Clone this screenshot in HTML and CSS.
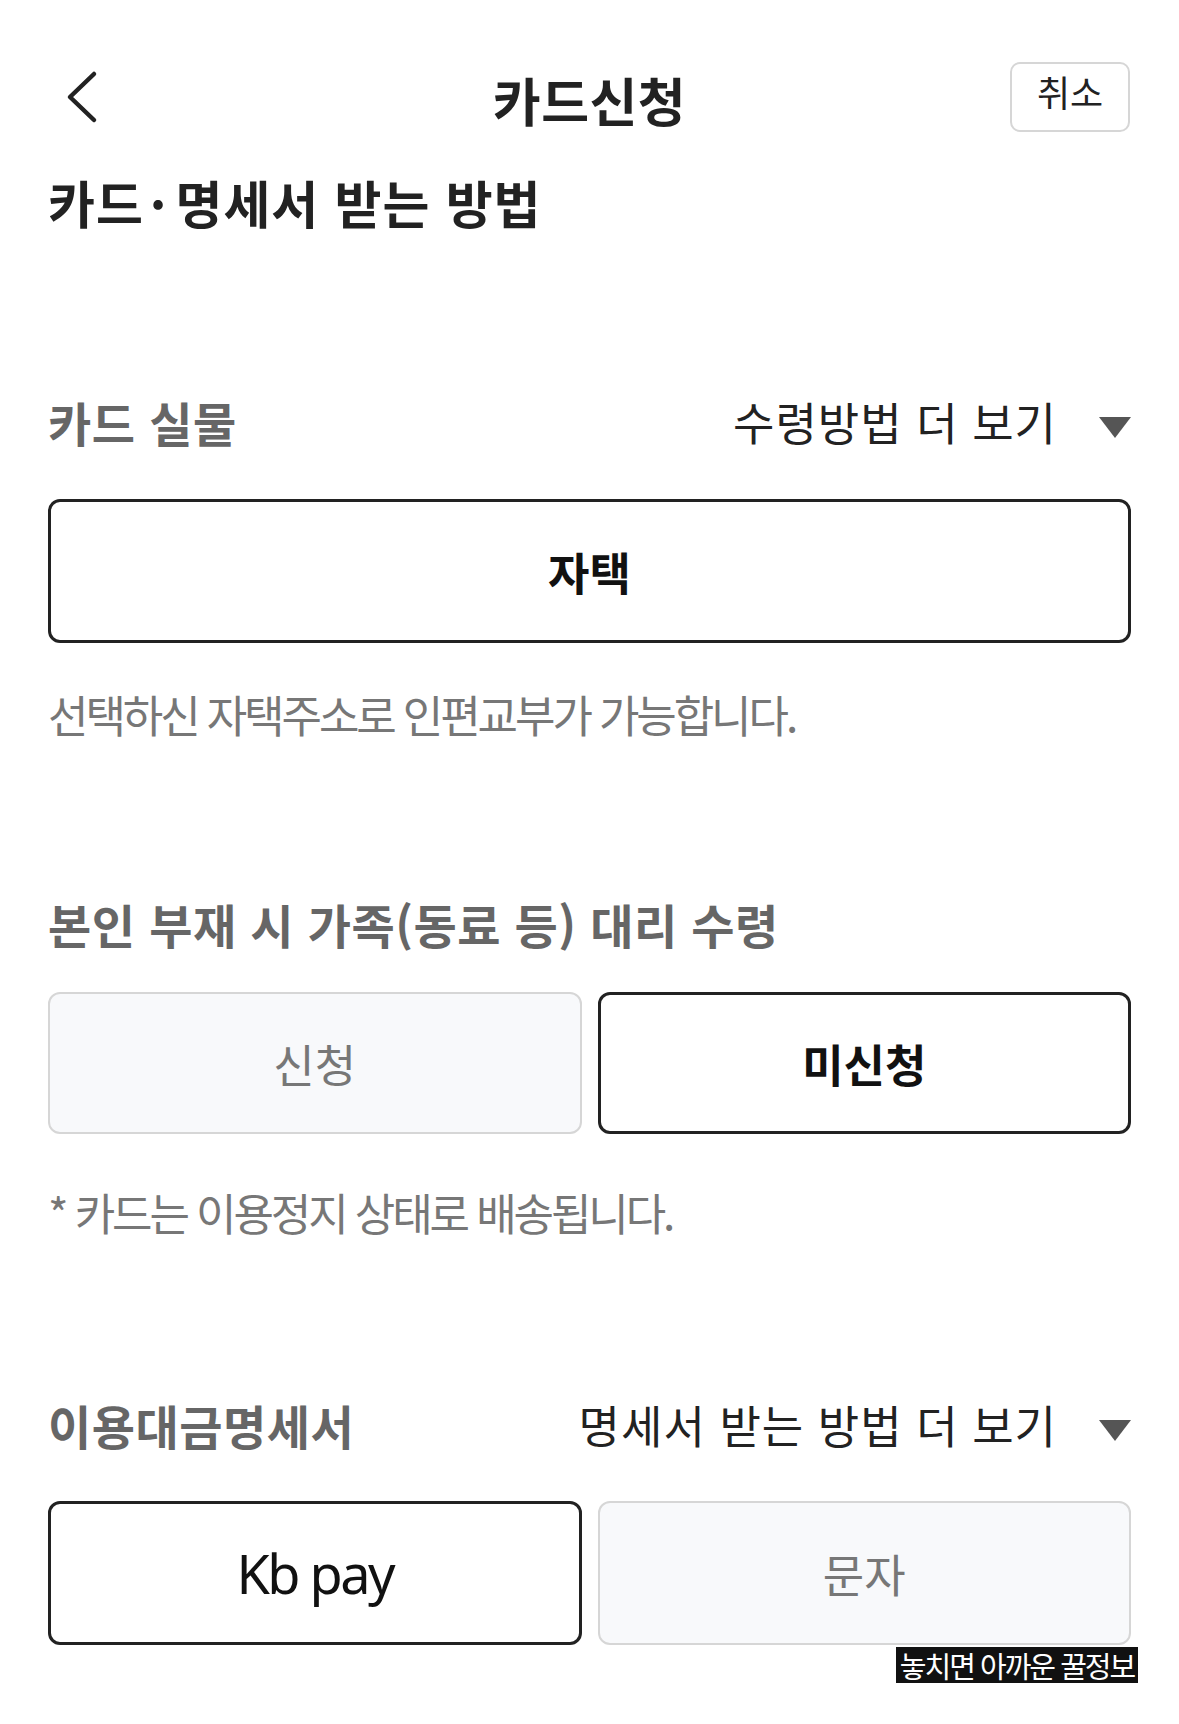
FILE: index.html
```html
<!DOCTYPE html>
<html lang="ko">
<head>
<meta charset="utf-8">
<title>카드신청</title>
<link rel="stylesheet" href="styles.css">
</head>
<body>
<div class="page">
  <header class="header">
    <div class="back">
      <svg width="60" height="70" viewBox="0 0 60 70"><path d="M46 12 L22 35 L46 58" fill="none" stroke="#222" stroke-width="4.5" stroke-linecap="round" stroke-linejoin="round"/></svg>
    </div>
    <div class="title">카드신청</div>
    <div class="cancel-wrap"><div class="cancel">취소</div></div>
  </header>

  <h1 class="heading">카드<span class="dot">·</span>명세서 받는 방법</h1>

  <div class="row s1">
    <div class="label">카드 실물</div>
    <div class="more">수령방법 더 보기<span class="tri"></span></div>
  </div>
  <div class="opt full sel b1"><span class="bold">자택</span></div>
  <p class="note n1">선택하신 자택주소로 인편교부가 가능합니다.</p>

  <div class="row s2">
    <div class="label">본인 부재 시 가족(동료 등) 대리 수령</div>
  </div>
  <div class="pair b2">
    <div class="opt off">신청</div>
    <div class="opt sel"><span class="bold">미신청</span></div>
  </div>
  <p class="note n2">* 카드는 이용정지 상태로 배송됩니다.</p>

  <div class="row s3">
    <div class="label">이용대금명세서</div>
    <div class="more">명세서 받는 방법 더 보기<span class="tri"></span></div>
  </div>
  <div class="pair b3">
    <div class="opt sel"><span class="latin">Kb pay</span></div>
    <div class="opt off">문자</div>
  </div>
</div>
<div class="watermark">놓치면 아까운 꿀정보</div>
</body>
</html>
```

FILE: styles.css
```css
html, body {
  margin: 0;
  padding: 0;
  background: #fff;
}
body {
  font-family: "Noto Sans CJK KR", "Noto Sans", sans-serif;
  color: #222;
  width: 1179px;
  height: 1724px;
  position: relative;
  overflow: hidden;
}
.page {
  padding: 0 48px;
}
.header {
  margin-top: 62px;
  height: 70px;
  display: grid;
  grid-template-columns: 1fr auto 1fr;
  grid-template-rows: 70px;
  align-items: start;
}
.back {
  height: 70px;
}
.back svg { display: block; }
.title {
  font-size: 52px;
  font-weight: 700;
  line-height: 70px;
  margin-top: 3px;
  letter-spacing: 0.5px;
  color: #222;
}
.cancel-wrap {
  display: flex;
  justify-content: flex-end;
  margin-right: 1px;
}
.cancel {
  box-sizing: border-box;
  width: 120px;
  height: 70px;
  border: 2px solid #d6d6d6;
  border-radius: 10px;
  font-size: 36px;
  line-height: 54px;
  padding-bottom: 12px;
  text-align: center;
  color: #222;
}
.heading {
  margin: 40px 0 0;
  font-size: 51px;
  font-weight: 700;
  line-height: 60px;
  letter-spacing: 1px;
  color: #222;
}
.dot {
  margin: 0 8px 0 6px;
}
.row {
  display: flex;
  justify-content: space-between;
  align-items: center;
  height: 60px;
}
.label {
  font-size: 47px;
  font-weight: 700;
  line-height: 60px;
  color: #666;
  letter-spacing: 0.5px;
}
.more {
  display: flex;
  align-items: center;
  font-size: 45px;
  line-height: 60px;
  color: #222;
  letter-spacing: 1px;
}
.tri {
  width: 0;
  height: 0;
  border-left: 16px solid transparent;
  border-right: 16px solid transparent;
  border-top: 21px solid #555;
  margin-left: 42px;
  margin-top: 10px;
}
.s1 { margin-top: 160px; }
.s2 { margin-top: 150px; }
.s3 { margin-top: 153px; }
.opt {
  box-sizing: border-box;
  height: 144px;
  border-radius: 12px;
  display: flex;
  align-items: center;
  justify-content: center;
  font-size: 45px;
  letter-spacing: 0;
}
.opt.sel {
  border: 3px solid #222;
  background: #fff;
  color: #111;
}
.opt.off {
  border: 2px solid #d6d6d6;
  background: #f8f9fb;
  color: #777;
}
.bold { font-weight: 700; }
.latin {
  font-family: "Noto Sans", "Noto Sans CJK KR", sans-serif;
  font-size: 54px;
  letter-spacing: -2.5px;
  font-weight: 400;
}
.b1 { margin-top: 47px; }
.pair {
  display: grid;
  grid-template-columns: 1fr 1fr;
  gap: 16px;
  height: 142px;
}
.pair .opt { height: 142px; }
.b2 { margin-top: 38px; }
.b3 { margin-top: 46px; height: 144px; }
.b3 .opt { height: 144px; }
.note {
  margin: 0;
  font-size: 44px;
  line-height: 60px;
  color: #777;
  letter-spacing: -3.1px;
}
.n1 { margin-top: 41px; }
.n2 { margin-top: 48px; }
.watermark {
  position: absolute;
  left: 896px;
  top: 1647px;
  width: 242px;
  height: 36px;
  background: #111;
  color: #fff;
  font-size: 29px;
  line-height: 36px;
  text-align: center;
  letter-spacing: -2px;
  white-space: nowrap;
}
```
